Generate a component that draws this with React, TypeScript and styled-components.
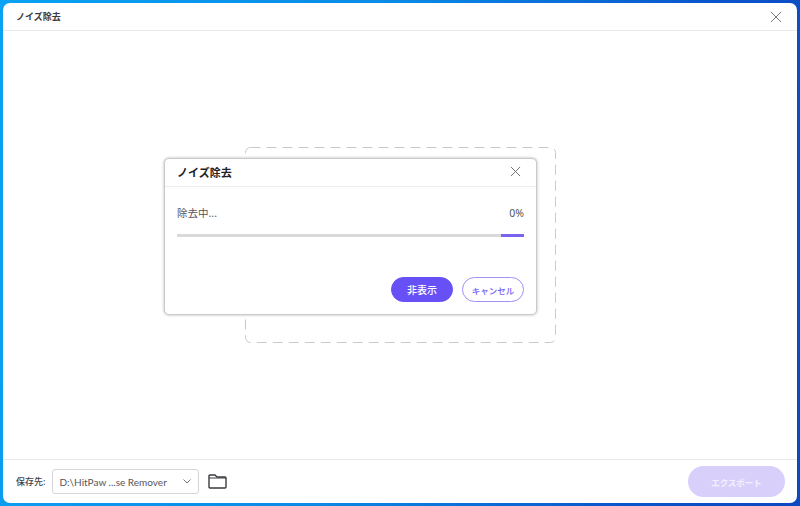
import React from 'react'
import styled, { createGlobalStyle } from 'styled-components'

const GlobalStyle = createGlobalStyle`
  html, body {
    margin: 0;
    height: 100%;
  }
  body {
    font-family: "Noto Sans", "Noto Sans CJK JP", sans-serif;
    background: linear-gradient(100deg, #0aa2f2 0%, #0a8ae6 45%, #0b55cc 80%, #0c48c0 100%);
  }
  #root {
    height: 100%;
  }
`

const Desktop = styled.div`
  box-sizing: border-box;
  width: 800px;
  height: 506px;
  padding: 3px;
  overflow: hidden;
`

const Win = styled.div`
  position: relative;
  display: flex;
  flex-direction: column;
  height: 100%;
  background: #ffffff;
  border-radius: 7px;
  overflow: hidden;
`

const TitleBar = styled.header`
  flex: none;
  box-sizing: border-box;
  height: 28px;
  display: flex;
  align-items: center;
  justify-content: space-between;
  padding: 0 15px 0 13px;
  border-bottom: 1px solid #e9e9ec;
`

const WinTitle = styled.h1`
  margin: 0;
  font-size: 9px;
  font-weight: 700;
  color: #3a3a40;
`

const CloseButton = styled.button<{ $size: number }>`
  display: flex;
  padding: 0;
  border: 0;
  background: none;
  width: ${({ $size }) => $size}px;
  height: ${({ $size }) => $size}px;
`

const Content = styled.main`
  flex: 1;
  display: flex;
  align-items: center;
  justify-content: center;
  padding-top: 2px;
`

const DropZone = styled.div`
  position: relative;
  width: 311px;
  height: 196px;
  margin-top: -3px;
`

const DashFrame = styled.svg`
  position: absolute;
  inset: 0;
`

const Dialog = styled.section`
  position: absolute;
  left: 161px;
  top: 155px;
  box-sizing: border-box;
  width: 373px;
  height: 157px;
  display: flex;
  flex-direction: column;
  background: #ffffff;
  border: 1px solid #cbcbce;
  border-radius: 5px;
  box-shadow: 0 0 3px rgba(0, 0, 0, 0.3);
`

const DialogHead = styled.div`
  flex: none;
  box-sizing: border-box;
  height: 28px;
  display: flex;
  align-items: center;
  justify-content: space-between;
  padding: 0 15px 2px 12px;
  border-bottom: 1px solid #ececee;
`

const DialogTitle = styled.h2`
  margin: 0;
  font-size: 11px;
  font-weight: 700;
  color: #222226;
`

const DialogBody = styled.div`
  flex: 1;
  display: flex;
  flex-direction: column;
  padding: 0 12px 12px;
`

const StatusRow = styled.div`
  display: flex;
  justify-content: space-between;
  align-items: center;
  margin-top: 18px;
  font-size: 10.5px;
  line-height: 16px;
  color: #55555c;
`

const Track = styled.div`
  height: 3px;
  margin-top: 13px;
  background: #d9d9dc;
  display: flex;
  justify-content: flex-end;
`

const Fill = styled.div`
  height: 100%;
  background: #7a63f1;
`

const Actions = styled.div`
  margin-top: auto;
  display: flex;
  justify-content: flex-end;
  gap: 9px;
`

const PillButton = styled.button<{ $outline?: boolean }>`
  box-sizing: border-box;
  width: 62px;
  height: 25px;
  padding: 0;
  border-radius: 13px;
  border: 1.5px solid ${({ $outline }) => ($outline ? '#a18ffa' : '#6650f6')};
  background: ${({ $outline }) => ($outline ? '#ffffff' : '#6650f6')};
  color: ${({ $outline }) => ($outline ? '#7560f4' : '#ffffff')};
  font-family: inherit;
  font-size: ${({ $outline }) => ($outline ? '8.5px' : '10px')};
  font-weight: 500;
`

const Footer = styled.footer`
  flex: none;
  box-sizing: border-box;
  height: 44px;
  display: flex;
  align-items: center;
  padding: 0 12px 0 13px;
  border-top: 1px solid #e9e9ec;
`

const PathLabel = styled.span`
  font-size: 9px;
  font-weight: 500;
  color: #44444a;
  margin-right: 7px;
`

const PathSelect = styled.div`
  box-sizing: border-box;
  width: 147px;
  height: 25px;
  display: flex;
  align-items: center;
  justify-content: space-between;
  padding: 0 7px 0 6px;
  border: 1px solid #d6d6da;
  border-radius: 3px;
  font-family: "Lato", "Noto Sans", sans-serif;
  font-size: 10px;
  color: #55555c;
`

const FolderIcon = styled.svg`
  margin-left: 9px;
`

const ExportButton = styled.button`
  margin-left: auto;
  width: 97px;
  height: 31px;
  padding: 0;
  border: 0;
  border-radius: 16px;
  background: #d8d0fb;
  color: #f4f1ff;
  font-family: inherit;
  font-size: 8.5px;
  font-weight: 700;
`

const Cross = ({ size, color }: { size: number; color: string }) => (
  <svg width={size} height={size} viewBox="0 0 12 12" fill="none">
    <path d="M1 1 L11 11 M11 1 L1 11" stroke={color} strokeWidth="1" />
  </svg>
)

export default function App() {
  return (
    <Desktop>
      <GlobalStyle />
      <Win>
        <TitleBar>
          <WinTitle>ノイズ除去</WinTitle>
          <CloseButton $size={12}>
            <Cross size={12} color="#77777d" />
          </CloseButton>
        </TitleBar>
        <Content>
          <DropZone>
            <DashFrame width="311" height="196" fill="none">
              <rect x="0.5" y="0.5" width="310" height="195" rx="5" stroke="#c9c9cd" strokeDasharray="10 6" />
            </DashFrame>
          </DropZone>
        </Content>
        <Footer>
          <PathLabel>保存先:</PathLabel>
          <PathSelect>
            <span>D:\HitPaw ...se Remover</span>
            <svg width="8" height="5" viewBox="0 0 8 5" fill="none">
              <path d="M0.5 0.5 L4 4 L7.5 0.5" stroke="#77777d" strokeWidth="1" />
            </svg>
          </PathSelect>
          <FolderIcon width="19" height="15" viewBox="0 0 19 15" fill="none">
            <path d="M1 13 V2 Q1 1 2 1 H7 L9 3 H17 Q18 3 18 4 V13 Q18 14 17 14 H2 Q1 14 1 13 Z" stroke="#3a3a3e" strokeWidth="1.4" />
            <path d="M1 4 H18" stroke="#3a3a3e" strokeWidth="1" />
          </FolderIcon>
          <ExportButton>エクスポート</ExportButton>
        </Footer>
        <Dialog>
          <DialogHead>
            <DialogTitle>ノイズ除去</DialogTitle>
            <CloseButton $size={11}>
              <Cross size={11} color="#66666c" />
            </CloseButton>
          </DialogHead>
          <DialogBody>
            <StatusRow>
              <span>除去中...</span>
              <span>0%</span>
            </StatusRow>
            <Track>
              <Fill style={{ width: `${(23 / 347) * 100}%` }} />
            </Track>
            <Actions>
              <PillButton>非表示</PillButton>
              <PillButton $outline>キャンセル</PillButton>
            </Actions>
          </DialogBody>
        </Dialog>
      </Win>
    </Desktop>
  )
}
